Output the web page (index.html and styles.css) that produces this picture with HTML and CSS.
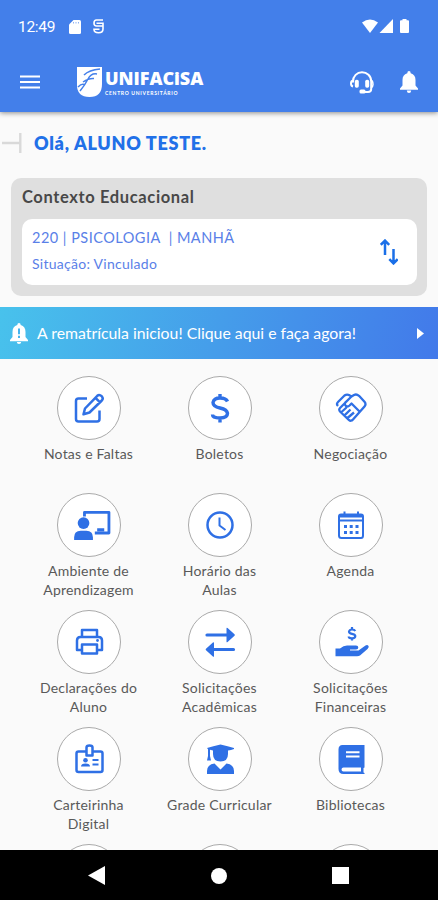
FILE: index.html
```html
<!DOCTYPE html>
<html lang="pt-BR">
<head>
<meta charset="utf-8">
<title>Unifacisa</title>
<meta name="viewport" content="width=device-width, initial-scale=1">
<link rel="stylesheet" href="styles.css">
</head>
<body>
<div class="screen">
  <header class="top">
    <div class="status">
      <span class="time">12:49</span>
      <svg class="sd" width="12" height="14" viewBox="0 0 12 14"><path d="M4.500 0H10.500Q12 0 12 1.500V12.500Q12 14 10.500 14H1.500Q0 14 0 12.500V4.500Z" fill="#fff"/><path d="M4.500 2v1.500M7 2v1.500M9.500 2v1.500" stroke="#8fb3f3" stroke-width="1"/></svg>
      <svg class="sync" width="11" height="15" viewBox="0 0 11 15" fill="none" stroke="#fff" stroke-width="1.600"><path d="M10 1H3.500Q1 1 1 4t2.500 3H10M3.500 4.300H10V10q0 3.800-4.500 3.800T1 10.300h5.500"/></svg>
      <svg class="signals" width="48" height="15" viewBox="0 0 48 15" fill="#fff"><path d="M0 3.600Q8 -2.600 16 3.600L8 14Z"/><path d="M31 0V14H17.500Z"/><path d="M40.500 0h4v1.300H46q1 0 1 1V13q0 1-1 1h-7q-1 0-1-1V2.300q0-1 1-1h1.500Z"/></svg>
    </div>
    <div class="appbar">
      <svg class="menu" width="20" height="14" viewBox="0 0 20 14" stroke="#fff" stroke-width="1.800"><path d="M0 1.500h20M0 7h20M0 12.500h20"/></svg>
      <div class="brand">
        <svg width="25" height="31" viewBox="0 0 25 31"><path d="M0 0H25V17Q25 30 12.500 30Q0 30 0 18Z" fill="#fff"/><path d="M23 2Q12 3 7 8M20 7Q14 6 11 12T3 24M6 15Q12 11 17 11.500M1 20Q5 16 8 18" fill="none" stroke="#437fea" stroke-width="1.500"/></svg>
        <div class="words"><b>UNIFACiSA</b><small>CENTRO UNIVERSITÁRIO</small></div>
      </div>
      <svg class="headset" width="24" height="23" viewBox="0 0 24 23" fill="none" stroke="#fff" stroke-width="2"><path d="M3 11.500V10.500C3 5 7 1.300 12 1.300S21.200 5 21.200 10.500V18Q21.200 21 18 21H12"/><path d="M3 9.500Q1 10 1 12.500T3 15.500" /><path d="M22 9.500Q23 11 23 13.500T21 17" stroke-width="1.500"/><rect x="4.800" y="8.800" width="4" height="8" rx="1.700" fill="#fff" stroke="none"/><rect x="15.200" y="8.800" width="4" height="8" rx="1.700" fill="#fff" stroke="none"/><rect x="9.500" y="18.600" width="6" height="4" rx="1.500" fill="#fff" stroke="none"/></svg>
      <svg class="bell" width="18" height="22" viewBox="0 0 18 22" fill="#fff"><path d="M9 0q1.700 0 1.700 2.200C14 3 15.500 5.500 15.500 9v5.500L18 17.500v1.200H0v-1.200l2.500-3V9c0-3.500 1.500-6 4.800-6.800Q7.300 0 9 0ZM6.800 19.500h4.400Q11 22 9 22t-2.200-2.500Z"/></svg>
    </div>
  </header>
  <main class="content">
    <div class="greeting">
      <svg width="22" height="20" viewBox="0 0 22 20" fill="none" stroke="#d9d9d9" stroke-width="2.400"><path d="M2 10H20M20.300 0V20"/></svg>
      <h1>Olá, ALUNO TESTE.</h1>
    </div>
    <section class="context">
      <h2>Contexto Educacional</h2>
      <div class="course">
        <div><p class="line1">220 | PSICOLOGIA&nbsp; | MANHÃ</p><p class="line2">Situação: Vinculado</p></div>
        <svg width="18" height="26" viewBox="0 0 18 26" fill="none" stroke="#1a6fe8" stroke-width="2.500"><path d="M5 16V2.500M.8 5.800L5 1.600L9.200 5.800M13.500 10V23.500M9.300 20.200L13.500 24.400L17.700 20.200"/></svg>
      </div>
    </section>
    <a class="banner">
      <svg width="18" height="21" viewBox="0 0 18 21" fill="#fff"><path d="M9 0q1.700 0 1.700 2C14 3 15.500 5.500 15.500 9v5L18 17v1.200H0V17l2.500-3V9c0-3.500 1.500-6 4.800-7Q7.300 0 9 0ZM6.800 19h4.400Q11 21 9 21t-2.200-2Z"/><path d="M9 5.500v5.800M9 12.800v2.200" stroke="#46b4ee" stroke-width="2"/></svg>
      <span>A rematrícula iniciou! Clique aqui e faça agora!</span>
      <svg class="chev" width="7" height="11" viewBox="0 0 7 11"><path d="M0 0L7 5.500L0 11Z" fill="#fff"/></svg>
    </a>
    <nav class="grid">
      <a class="item"><i><svg viewBox="0 0 32 32"><path d="M14 6.500H5.500Q3 6.500 3 9V27Q3 29.500 5.500 29.500H24Q26.500 29.500 26.500 27V18.500" /><path d="M10.500 22.300L12 16.500L24.300 3.800Q26.300 2 28.700 4.200Q30.700 6.500 28.800 8.500L16.500 20.500ZM22.500 5.800L26.800 10.200"/></svg></i><span>Notas e Faltas</span></a>
      <a class="item"><i><svg viewBox="0 0 32 32"><path stroke-width="3.400" d="M16 2V6M16 26V30.500M23.500 9.500Q22 6 16 6T9 10.500Q9 14.500 16 16T23.500 21.300Q23.500 26 16 26T8.500 22.500"/></svg></i><span>Boletos</span></a>
      <a class="item"><i><svg viewBox="0 0 32 32"><path stroke-width="2.300" d="M3 14Q1 12 3 10L9.500 3.500Q12 1.700 14.500 3.300L16.500 4.500L19 3Q21.500 1.700 24 3.800L29.500 9.800Q31.500 12.200 29.500 14.500L18 27.500Q16 29.800 13.800 27.800L5 19.500Q3.500 17.500 5 16L10 11M16.500 4.500L10.500 10.300Q9 12.300 10.800 13.800T14.500 13.500L16.500 11.500L24.500 19.500M6.500 20L11.500 15.500M9.500 23.300L15.500 17.500M12.500 26L19 20.500"/></svg></i><span>Negociação</span></a>
      <a class="item"><i><svg class="wide" viewBox="0 0 42 34"><path stroke-width="3" d="M13 8V3.500H39V25.500H24"/><g class="fill"><circle cx="12" cy="15" r="6.200"/><path d="M2 33V30Q2 23 9 23H15Q22 23 22 30V33ZM26.500 24V20.500H34V24Z"/></g></svg></i><span>Ambiente de<br>Aprendizagem</span></a>
      <a class="item"><i><svg viewBox="0 0 32 32"><circle cx="16" cy="16" r="12.500"/><path stroke-width="2" d="M15.500 8.500V16.500L21.500 21"/></svg></i><span>Horário das<br>Aulas</span></a>
      <a class="item"><i><svg viewBox="0 0 32 32"><path stroke-width="2" d="M6 5.500H26Q28 5.500 28 7.500V26.500Q28 29 26 29H6.500Q4 29 4 26.500V7.500Q4 5.500 6 5.500ZM4 11.500H28M9.500 2.500V6M23 2.500V6M4 7.500H28"/><path stroke-width="3" d="M9 17.500h3M14.700 17.500h3M20.500 17.500h3M9 23.500h3M14.700 23.500h3M20.500 23.500h3"/></svg></i><span>Agenda</span></a>
      <a class="item"><i><svg viewBox="0 0 32 32"><path d="M9 10V4H24V10M9 24H4V14.500Q4 11 7.500 11H25.500Q29 11 29 14.500V24H24M9 18.500H24V27.500H9Z"/><circle cx="24.500" cy="14.500" r="1.400" class="fill"/></svg></i><span>Declarações do<br>Aluno</span></a>
      <a class="item"><i><svg viewBox="0 0 32 32"><path stroke-width="3.200" stroke-linecap="round" d="M3 9H24M9 23.500H29.500"/><path class="fill" d="M22.500 2.500Q22.500 1 23.600 2.100L30.500 8.300Q31.300 9 30.500 9.700L23.600 15.900Q22.500 17 22.500 15.500ZM10 17Q10 15.500 8.900 16.600L2 22.800Q1.200 23.500 2 24.200L8.900 30.400Q10 31.500 10 30Z"/></svg></i><span>Solicitações<br>Acadêmicas</span></a>
      <a class="item"><i><svg class="hand" viewBox="0 0 34 34"><path stroke-width="2.200" d="M17 2V5M17 13V15.500M20.300 6Q19.500 4.500 17 4.500T14 6.800Q14 8.300 17 8.800T20.300 11Q20.300 13.300 17 13.300T13.700 11.500"/><path class="fill" d="M.5 23.500H5Q9 20 13 20.500H21Q23.300 20.500 23.300 22.500T21 24.500H15V25.500H23.500L30.500 20.500Q32.500 19.500 33.500 21Q34.200 22.300 32.500 24L25 30.500Q24 31.300 22 31.300H.5Z"/></svg></i><span>Solicitações<br>Financeiras</span></a>
      <a class="item"><i><svg viewBox="0 0 32 32"><path d="M12.500 8.500H5.500Q3.500 8.500 3.500 10.500V27Q3.500 29 5.500 29H27.500Q29.500 29 29.500 27V10.500Q29.500 8.500 27.500 8.500H20M13.500 12.500V4.500Q13.500 2.500 16.500 2.500T19.500 4.500V12.500Z"/><path stroke-width="2" d="M19.500 17H25.500M19.500 21.500H25.500"/><path class="fill" d="M8 23.500Q8 20.500 12.500 20.500T17 23.500Z"/><circle class="fill" cx="12.500" cy="17.300" r="2.300"/></svg></i><span>Carteirinha<br>Digital</span></a>
      <a class="item"><i><svg viewBox="0 0 32 32"><g class="fill"><path d="M3 5Q9 3 16.500 1.500Q24 3 30 5V6Q27 7 24 7.500V11Q24 18.500 16.500 18.500T9 11V7.500L6 6.800V13L7 17.500H3L4 13V6.300Z"/><path d="M3 31V28Q3 21.500 10.500 20.500L16.500 26.500L22.500 20.500Q30 21.500 30 28V31Z"/></g></svg></i><span>Grade Curricular</span></a>
      <a class="item"><i><svg viewBox="0 0 32 32"><path class="fill" fill-rule="evenodd" d="M7.500 2H29.500V24.500L28.500 25V29.500L29.500 30V31H8.500Q3.500 31 3.500 26V6.500Q3.500 2 7.500 2ZM11 8.300V10.300H24.500V8.300ZM11 12.600V14.600H24.500V12.600ZM8.500 24.500Q6.500 24.500 6.500 26.500T8.500 28.500H26V24.500Z"/></svg></i><span>Bibliotecas</span></a>
      <a class="item"><i></i></a><a class="item"><i></i></a><a class="item"><i></i></a>
    </nav>
  </main>
  <footer class="nav">
    <svg width="17" height="19" viewBox="0 0 17 19"><path d="M17 0V19L0 9.500Z" fill="#fff"/></svg>
    <span class="home"></span>
    <span class="recent"></span>
  </footer>
</div>
</body>
</html>
```
FILE: styles.css
```css
* { box-sizing: border-box; margin: 0; padding: 0; }
body { background: #fafafa; font-family: Lato, "Open Sans", sans-serif; }
svg { display: block; flex: none; }
.screen { width: 438px; height: 900px; display: flex; flex-direction: column; overflow: hidden; }
.top { flex: none; height: 112px; background: #437fea; box-shadow: 0 1px 5px rgba(0,0,0,.45); z-index: 1; color: #fff; }
.status { height: 53px; padding: 0 28px 0 18px; display: flex; align-items: center; }
.time { font: 400 15.5px/20px Roboto, sans-serif; width: 51px; letter-spacing: -.3px; }
.sync { margin-left: 12px; }
.signals { margin-left: auto; }
.appbar { height: 58px; padding: 0 20px; display: flex; align-items: center; }
.brand { display: flex; margin-left: 37px; gap: 3px; height: 31px; }
.words { display: flex; flex-direction: column; width: 102px; }
.words b { font: 800 18px/22px "Open Sans", sans-serif; letter-spacing: -.05px; height: 22px; }
.words small { font: 700 5px/6px Lato, sans-serif; letter-spacing: .7px; margin-top: 1px; white-space: nowrap; }
.headset { margin-left: auto; }
.bell { margin-left: 26px; }
.content { flex: 1; min-height: 0; overflow: hidden; }
.greeting { height: 66px; padding-top: 21px; display: flex; }
.greeting h1 { margin-left: 12px; font-size: 18px; line-height: 20px; font-weight: 800; color: #2170e8; letter-spacing: .7px; white-space: nowrap; }
.context { margin: 0 11px; height: 118px; padding: 10px 10px 11px 11px; border-radius: 10px; background: #dfdfdf; }
.context h2 { font-size: 16.5px; line-height: 19px; height: 31px; color: #484848; letter-spacing: .63px; font-weight: 700; }
.course { height: 66px; border-radius: 10px; background: #fff; display: flex; justify-content: space-between; align-items: center; padding: 0 19px 0 10px; color: #5a7fe8; font-size: 15px; white-space: nowrap; }
.course p { line-height: 26px; position: relative; top: -1px; }
.line1 { font-size: 14.5px; letter-spacing: .48px; }
.line2 { font-size: 14px; letter-spacing: .27px; }
.banner { margin-top: 11px; height: 52px; padding: 0 14px 0 10px; display: flex; align-items: center; background: linear-gradient(105deg, #48c2ec, #459dea 50%, #4279ea); color: #fff; font-size: 15.8px; }
.banner span { margin: -2px 0 0 9px; white-space: nowrap; }
.chev { margin-left: auto; }
.grid { display: grid; grid-template-columns: repeat(3, 131px); grid-auto-rows: 117px; padding: 17px 0 0 23px; }
.item { display: flex; flex-direction: column; align-items: center; text-align: center; }
.item i { flex: none; width: 64px; height: 64px; border: 1px solid #aaa; border-radius: 50%; background: #fff; display: flex; align-items: center; justify-content: center; }
.item svg { width: 32px; height: 32px; fill: none; stroke: #2f70e5; stroke-width: 2.500; stroke-linejoin: round; }
.item .wide { width: 40px; height: 32px; margin-left: 6px; }
.item .hand { width: 34px; height: 34px; margin-left: 3px; }
.item .fill { fill: #2f70e5; stroke: none; }
.item span { margin-top: 4px; font-size: 14px; line-height: 19px; color: #595959; white-space: nowrap; letter-spacing: .22px; }
.nav { flex: none; height: 50px; background: #000; display: flex; align-items: center; justify-content: space-between; padding: 1px 89px 0 88px; z-index: 1; }
.home { width: 16px; height: 16px; border-radius: 50%; background: #fff; }
.recent { width: 17px; height: 17px; background: #fff; }
```
